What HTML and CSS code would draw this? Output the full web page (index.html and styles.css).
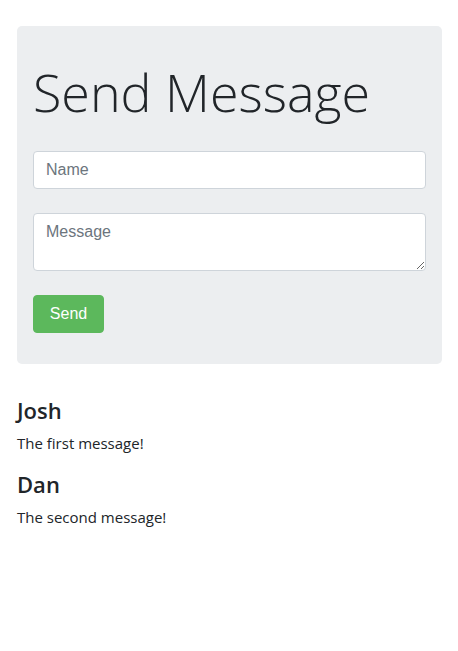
FILE: index.html
```html
<!DOCTYPE html>
<html lang="en">
<head>
<meta charset="utf-8">
<title>Send Message</title>
<link rel="stylesheet" href="styles.css">
</head>
<body>
<div class="container">
  <div class="jumbotron">
    <h1 class="display">Send Message</h1>
    <form class="form">
      <input class="field" type="text" placeholder="Name">
      <textarea class="field area" placeholder="Message"></textarea>
      <button class="btn" type="button">Send</button>
    </form>
  </div>
  <div class="messages">
    <div class="message">
      <h3 class="author">Josh</h3>
      <p class="text">The first message!</p>
    </div>
    <div class="message">
      <h3 class="author">Dan</h3>
      <p class="text">The second message!</p>
    </div>
  </div>
</div>
</body>
</html>
```
FILE: styles.css
```css
html, body {
  margin: 0;
  padding: 0;
  background: #fff;
}
body {
  font-family: "Open Sans", "Noto Sans", sans-serif;
  color: #212529;
  font-size: 15px;
}
.container {
  padding: 26px 16px 0 17px;
}
.jumbotron {
  background: #eceef0;
  border-radius: 5px;
  padding: 32px 16px 31px;
  margin-bottom: 32px;
}
.display {
  margin: 0 0 26px;
  font-size: 52px;
  font-weight: 300;
  line-height: 67px;
  color: #212529;
}
.form {
  display: flex;
  flex-direction: column;
  align-items: flex-start;
  gap: 24px;
}
.field {
  box-sizing: border-box;
  width: 100%;
  height: 38px;
  padding: 6px 12px;
  border: 1px solid #ced4da;
  border-radius: 4px;
  background: #fff;
  font-family: "Liberation Sans", Arial, sans-serif;
  font-size: 16px;
  line-height: 24px;
  color: #495057;
  margin: 0;
}
.field::placeholder {
  color: #6c757d;
}
.area {
  height: 58px;
  resize: vertical;
  display: block;
}
.btn {
  height: 38px;
  width: 71px;
  border: 1px solid #5cb85c;
  border-radius: 4px;
  background: #5cb85c;
  color: #fff;
  font-family: "Liberation Sans", Arial, sans-serif;
  font-size: 16px;
  padding: 6px 12px;
}
.message {
  margin-bottom: 9px;
}
.author {
  margin: 0 0 7px;
  font-size: 22px;
  font-weight: 600;
  line-height: 29px;
}
.text {
  margin: 0 0 16px;
  font-size: 15px;
  line-height: 22px;
}
```
